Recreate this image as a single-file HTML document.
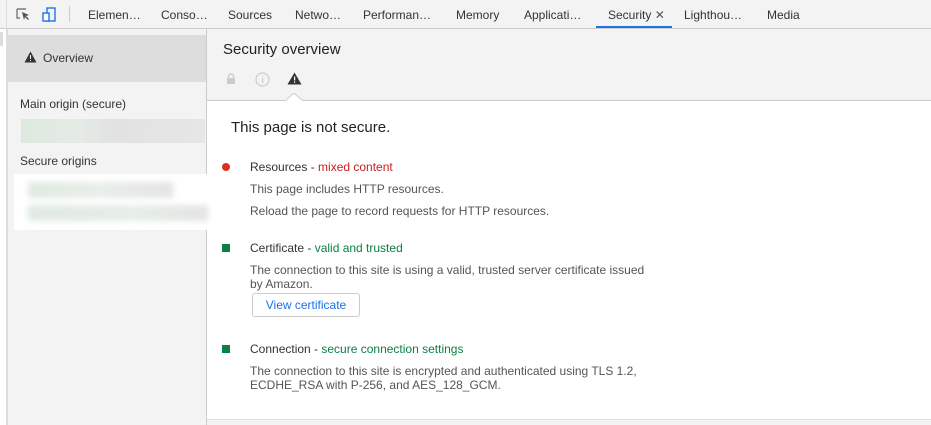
<!DOCTYPE html>
<html><head><style>
*{margin:0;padding:0;box-sizing:border-box}
body{width:931px;height:425px;overflow:hidden;background:#fff;font-family:"Liberation Sans",Roboto,sans-serif;color:#333;position:relative;font-size:12px}
.a{position:absolute;white-space:nowrap}
.tb{left:0;top:0;width:931px;height:29px;background:#f3f3f3;border-bottom:1px solid #ccc}
.tab{top:8px;font-size:12px;color:#333}
.sb{left:7px;top:29px;width:200px;height:396px;background:#f3f3f3;border-right:1px solid #ccc;border-left:1px solid #ddd}
.hd{left:207px;top:29px;width:724px;height:72px;background:#f3f3f3;border-bottom:1px solid #ccc}
.g{color:#0b8043}.r{color:#c5221f}
.t{font-size:12px;color:#333}
.d{font-size:12px;color:#555}
</style></head><body>
<div class="a tb"></div>
<div class="a" style="left:6px;top:0;width:1px;height:29px;background:#ddd"></div>
<svg class="a" style="left:16px;top:8px" width="16" height="14" viewBox="0 0 16 14"><path d="M1 1h9M1 1v9h3" stroke="#666" fill="none" stroke-width="1.2"/><path d="M6 4l7 3-3 1 3 3-1 1-3-3-1 3z" fill="#555"/></svg>
<svg class="a" style="left:42px;top:7px" width="15" height="16" viewBox="0 0 15 16"><rect x="5" y="1" width="8" height="13" fill="none" stroke="#1a73e8" stroke-width="1.4"/><rect x="1" y="6" width="6" height="8" fill="#fff" stroke="#1a73e8" stroke-width="1.4"/></svg>
<div class="a" style="left:69px;top:6px;width:1px;height:16px;background:#ccc"></div>
<div class="a tab" style="left:88px">Elemen…</div>
<div class="a tab" style="left:161px">Conso…</div>
<div class="a tab" style="left:228px">Sources</div>
<div class="a tab" style="left:295px">Netwo…</div>
<div class="a tab" style="left:363px">Performan…</div>
<div class="a tab" style="left:456px">Memory</div>
<div class="a tab" style="left:524px">Applicati…</div>
<div class="a tab" style="left:608px">Security <span style="color:#555">✕</span></div>
<div class="a" style="left:596px;top:26px;width:76px;height:2px;background:#1a73e8"></div>
<div class="a tab" style="left:684px">Lighthou…</div>
<div class="a tab" style="left:767px">Media</div>

<div class="a" style="left:0;top:29px;width:7px;height:396px;background:#fff;border-right:1px solid #ddd"></div>
<div class="a" style="left:0;top:32px;width:3px;height:14px;background:#ddd"></div>
<div class="a sb"></div>
<div class="a" style="left:7px;top:35px;width:199px;height:47px;background:#ddd"></div>
<svg class="a" style="left:24px;top:51px" width="13" height="12" viewBox="0 0 13 12"><path d="M6.5 0.5L12.5 11.5H0.5z" fill="#333"/><path d="M6 4h1v4h-1zM6 9h1v1h-1z" fill="#fff"/></svg>
<div class="a" style="left:43px;top:51px;font-size:12px;color:#333">Overview</div>
<div class="a" style="left:20px;top:97px;color:#333">Main origin (secure)</div>
<div class="a" style="left:21px;top:119px;width:184px;height:24px;background:linear-gradient(90deg,#dde9df 0,#e4ebe5 30%,#e2e2e2 50%,#e6e6e6 100%)"></div>
<div class="a" style="left:20px;top:154px;color:#333">Secure origins</div>
<div class="a" style="left:14px;top:174px;width:196px;height:56px;background:#fff"></div>
<div class="a" style="left:28px;top:182px;width:145px;height:16px;background:linear-gradient(90deg,#dfeae1,#e8eee9 50%,#e4e4e4);filter:blur(3px)"></div>
<div class="a" style="left:28px;top:205px;width:180px;height:16px;background:linear-gradient(90deg,#dfeae1,#e5eee7 60%,#e4e4e4);filter:blur(3px)"></div>

<div class="a hd"></div>
<div class="a" style="left:223px;top:41px;font-size:15px;color:#222">Security overview</div>
<svg class="a" style="left:226px;top:73px" width="10" height="12" viewBox="0 0 10 12"><rect x="1" y="5" width="8" height="6" fill="#ccc"/><path d="M2.5 5V3.5a2.5 2.5 0 0 1 5 0V5" stroke="#ccc" fill="none" stroke-width="1.4"/></svg>
<svg class="a" style="left:255px;top:72px" width="15" height="15" viewBox="0 0 15 15"><circle cx="7.5" cy="7.5" r="6.5" fill="none" stroke="#ccc" stroke-width="1.2"/><path d="M7 6h1.2v5H7zM7 3.5h1.2v1.2H7z" fill="#ccc"/></svg>
<svg class="a" style="left:287px;top:72px" width="15" height="13" viewBox="0 0 15 13"><path d="M7.5 0.5L14.5 12.5H0.5z" fill="#333"/><path d="M7 4.5h1.2v4H7zM7 9.5h1.2v1.2H7z" fill="#fff"/></svg>
<svg class="a" style="left:285px;top:93px" width="18" height="9" viewBox="0 0 18 9"><path d="M0 8L9 0l9 8" fill="#fff" stroke="#ccc"/><rect x="0" y="8" width="18" height="1" fill="#fff"/></svg>

<div class="a" style="left:231px;top:119px;font-size:15px;color:#222">This page is not secure.</div>
<div class="a" style="left:222px;top:163px;width:8px;height:8px;border-radius:50%;background:#d93025"></div>
<div class="a t" style="left:250px;top:160px">Resources - <span class="r">mixed content</span></div>
<div class="a d" style="left:250px;top:182px">This page includes HTTP resources.</div>
<div class="a d" style="left:250px;top:204px">Reload the page to record requests for HTTP resources.</div>

<div class="a" style="left:222px;top:244px;width:8px;height:8px;background:#0b8043"></div>
<div class="a t" style="left:250px;top:241px">Certificate - <span class="g">valid and trusted</span></div>
<div class="a d" style="left:250px;top:263px;line-height:14px">The connection to this site is using a valid, trusted server certificate issued<br>by Amazon.</div>
<div class="a" style="left:252px;top:293px;width:108px;height:24px;border:1px solid #ccc;border-radius:3px;background:#fff;color:#1a73e8;text-align:center;line-height:22px">View certificate</div>

<div class="a" style="left:222px;top:345px;width:8px;height:8px;background:#0b8043"></div>
<div class="a t" style="left:250px;top:342px">Connection - <span class="g">secure connection settings</span></div>
<div class="a d" style="left:250px;top:364px;line-height:14px">The connection to this site is encrypted and authenticated using TLS 1.2,<br>ECDHE_RSA with P-256, and AES_128_GCM.</div>

<div class="a" style="left:207px;top:419px;width:724px;height:6px;background:#f3f3f3;border-top:1px solid #e0e0e0"></div>
</body></html>
